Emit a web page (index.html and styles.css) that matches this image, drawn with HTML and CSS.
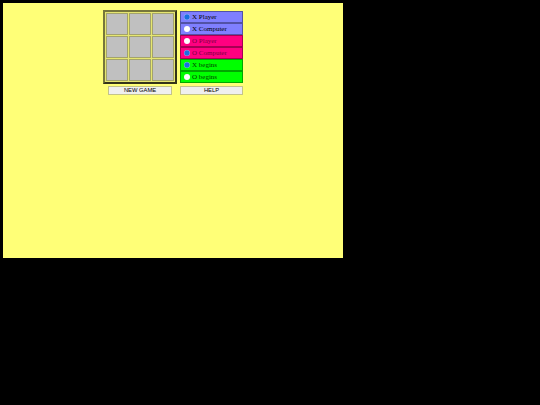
FILE: index.html
```html
<!DOCTYPE html>
<html>
<head>
<meta charset="utf-8">
<title>Tic Tac Toe</title>
<link rel="stylesheet" href="styles.css">
</head>
<body>
<main class="panel">
  <div class="game">
    <div class="board">
      <div class="cell"></div><div class="cell"></div><div class="cell"></div>
      <div class="cell"></div><div class="cell"></div><div class="cell"></div>
      <div class="cell"></div><div class="cell"></div><div class="cell"></div>
    </div>
    <div class="options">
      <label class="opt blue"><input type="radio" name="x" checked>X Player</label>
      <label class="opt blue"><input type="radio" name="x">X Computer</label>
      <label class="opt pink"><input type="radio" name="o">O Player</label>
      <label class="opt pink"><input type="radio" name="o" checked>O Computer</label>
      <label class="opt green"><input type="radio" name="b" checked>X begins</label>
      <label class="opt green"><input type="radio" name="b">O begins</label>
    </div>
    <div class="btn-cell left"><button class="btn new">NEW GAME</button></div>
    <div class="btn-cell"><button class="btn">HELP</button></div>
  </div>
</main>
</body>
</html>
```
FILE: styles.css
```css
html, body { margin: 0; padding: 0; background: #000; height: 100%; overflow: hidden; }
.panel {
  margin: 3px 0 0 3px;
  width: 340px;
  height: 255px;
  background: #ffff77;
  display: flex;
  justify-content: center;
  align-items: flex-start;
  padding-top: 7px;
  box-sizing: border-box;
}
.game {
  display: grid;
  grid-template-columns: 74px 63px;
  column-gap: 3px;
  row-gap: 2px;
  align-content: start;
}
.board {
  box-sizing: border-box;
  width: 74px;
  height: 74px;
  border: 2px solid;
  border-color: #77773a #33331a #33331a #77773a;
  background: #e6e670;
  padding: 1px;
  display: grid;
  grid-template-columns: repeat(3, 1fr);
  grid-template-rows: repeat(3, 1fr);
  gap: 1px;
}
.cell {
  background: #c0c0c0;
  border: 1px solid #a3a36c;
}
.options {
  display: flex;
  flex-direction: column;
  margin-top: 1px;
  height: 72px;
}
.opt {
  flex: 1;
  display: flex;
  align-items: center;
  box-sizing: border-box;
  border: 1px solid rgba(0, 0, 0, 0.35);
  font: 7px "Liberation Serif", serif;
  color: #000;
  padding-left: 3px;
}
.opt input {
  appearance: none;
  width: 6px;
  height: 6px;
  margin: 0 2px 0 0;
  border-radius: 50%;
  background: #fff;
  flex: none;
}
.opt input:checked {
  background: radial-gradient(circle, #1a6fe0 0 50%, #cfe0ff 85%);
}
.blue { background: #7f7fff; }
.pink { background: #ff0080; color: #7a0040; }
.green { background: #00ff00; color: #004000; }
.btn-cell { display: flex; justify-content: flex-end; }
.btn-cell.left { padding-right: 5px; }
.btn {
  box-sizing: border-box;
  width: 63px;
  height: 9px;
  margin: 0;
  padding: 0;
  border: 1px solid #c4c48a;
  background: #efefef;
  font: 5.8px "Liberation Sans", sans-serif;
  color: #000;
  line-height: 7px;
}
.btn.new { width: 64px; }
```
